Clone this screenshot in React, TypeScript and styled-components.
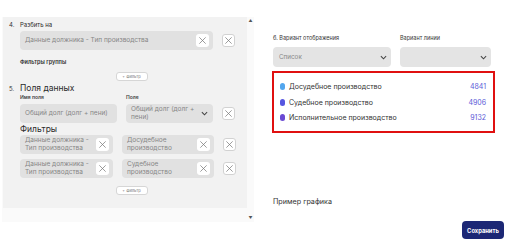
import React from "react";
import styled, { createGlobalStyle } from "styled-components";

const GlobalStyle = createGlobalStyle`
  * { box-sizing: border-box; }
  body {
    margin: 0;
    background: #ffffff;
    font-family: Inter, "Noto Sans", sans-serif;
    color: #2b2b2b;
  }
`;

const Page = styled.div`
  width: 512px;
  height: 244px;
  display: flex;
  overflow: hidden;
`;

// left side
const ScrollBox = styled.div`
  margin: 17px 0 0 2px;
  width: 252px;
  height: 205px;
  background: #fafafa;
  display: grid;
  grid-template-columns: 245px 7px;
  grid-template-rows: 191px 14px;
`;

const Rail = styled.div`
  grid-column: 2;
  grid-row: 1 / span 2;
  display: flex;
  flex-direction: column;
  justify-content: space-between;
  align-items: center;
  padding: 2px 0 2px;
  font-size: 4px;
  color: #555;
  line-height: 1;
`;

const Card = styled.div`
  grid-column: 1;
  grid-row: 1;
  background: #f2f2f2;
  margin-left: 1px;
  padding: 3px 0 0 6px;
  display: flex;
  flex-direction: column;
`;

const Section = styled.div<{ top?: number }>`
  display: grid;
  grid-template-columns: 11px 1fr;
  margin-top: ${({ top }) => top ?? 0}px;
`;

const Num = styled.span<{ big?: boolean }>`
  font-size: 6px;
  line-height: ${({ big }) => (big ? "11px" : "9px")};
  color: #333;
`;

const Body = styled.div`
  display: flex;
  flex-direction: column;
`;

const Title = styled.div<{ big?: boolean; top?: number }>`
  font-size: ${({ big }) => (big ? "8.5px" : "6px")};
  line-height: ${({ big }) => (big ? "11px" : "9px")};
  margin-top: ${({ top }) => top ?? 0}px;
  color: #2a2a2a;
`;

const Caption = styled.div<{ top?: number }>`
  font-size: 5.5px;
  font-weight: 600;
  color: #333;
  margin-top: ${({ top }) => top ?? 0}px;
  line-height: 7px;
`;

const Row = styled.div<{ top?: number }>`
  display: flex;
  align-items: center;
  gap: 9px;
  margin-top: ${({ top }) => top ?? 0}px;
`;

const Pair = styled.div`
  display: flex;
  gap: 9px;
`;

const Field = styled.div<{ w: number; h?: number }>`
  width: ${({ w }) => w}px;
  height: ${({ h }) => h ?? 19}px;
  background: #e1e1e1;
  border-radius: 4px;
  display: flex;
  align-items: center;
  justify-content: space-between;
  padding: 0 4px 0 5px;
  font-size: 6.5px;
  line-height: 7.5px;
  color: #868686;
`;

const FieldText = styled.span`
  flex: 1;
  min-width: 0;
  padding-right: 3px;
`;

const ChipX = styled.span`
  width: 13px;
  height: 13px;
  background: #fff;
  border-radius: 3px;
  display: flex;
  align-items: center;
  justify-content: center;
  flex-shrink: 0;
`;

const OuterX = styled(ChipX)`
  border: 1px solid #d2d2d2;
`;

const Chevron = styled.span`
  width: 10px;
  display: flex;
  justify-content: center;
  flex-shrink: 0;
`;

const Labels = styled.div`
  display: flex;
  font-size: 5px;
  font-weight: 600;
  color: #444;
  line-height: 7px;
`;

const LabelCell = styled.span<{ w: number }>`
  width: ${({ w }) => w}px;
`;

const AddButton = styled.div<{ top?: number }>`
  align-self: center;
  margin: ${({ top }) => top ?? 0}px 0 0 -4px;
  width: 32px;
  height: 9px;
  border: 1px solid #d6d6d6;
  border-radius: 3px;
  background: #fff;
  font-size: 4px;
  color: #777;
  display: flex;
  align-items: center;
  justify-content: center;
`;

// right side
const Right = styled.div`
  margin-left: 19px;
  width: 232px;
  padding-top: 34px;
  display: flex;
  flex-direction: column;
`;

const SelectRow = styled.div`
  display: grid;
  grid-template-columns: 118px 91px;
  column-gap: 9px;
`;

const SelectLabel = styled.div`
  font-size: 5.5px;
  line-height: 8px;
  color: #333;
`;

const Select = styled.div`
  margin-top: 5px;
  height: 20px;
  border-radius: 4px;
  background: #e4e4e4;
  display: flex;
  align-items: center;
  justify-content: space-between;
  padding: 0 4px 0 6px;
  font-size: 6.3px;
  color: #868686;
`;

const Legend = styled.div`
  margin: 4px 0 0 -1px;
  width: 223px;
  height: 62px;
  border: 2px solid #e01010;
  background: #fff;
  padding: 6px 7px 0 6px;
  display: flex;
  flex-direction: column;
`;

const LegendRow = styled.div`
  display: flex;
  align-items: center;
  height: 15.5px;
  font-size: 7px;
  color: #333;
`;

const Dot = styled.span<{ color: string }>`
  width: 5px;
  height: 7px;
  border-radius: 3px;
  background: ${({ color }) => color};
  margin-right: 4px;
`;

const LegendName = styled.span`
  flex: 1;
`;

const LegendValue = styled.span`
  color: #5a5ad8;
`;

const ChartTitle = styled.div`
  margin-top: 64px;
  font-size: 7.2px;
  color: #333;
`;

const SaveButton = styled.button`
  align-self: flex-end;
  margin: 15px 1px 0 0;
  width: 42px;
  height: 18px;
  border: none;
  border-radius: 4px;
  background: #1c2775;
  color: #fff;
  font-family: inherit;
  font-size: 5.8px;
  font-weight: 700;
  padding: 0;
`;

const XIcon = ({ size = 9 }: { size?: number }) => (
  <svg width={size} height={size} viewBox="0 0 10 10">
    <path d="M1.5 1.5 L8.5 8.5 M8.5 1.5 L1.5 8.5" stroke="#777" strokeWidth="0.8" fill="none" />
  </svg>
);

const ChevronIcon = () => (
  <svg width="7" height="5" viewBox="0 0 8 5">
    <path d="M1 1 L4 4 L7 1" stroke="#444" strokeWidth="1.2" fill="none" />
  </svg>
);

const filters = [
  ["Данные должника -\nТип производства", "Досудебное\nпроизводство"],
  ["Данные должника -\nТип производства", "Судебное\nпроизводство"],
];

const legend = [
  { name: "Досудебное производство", value: 4841, color: "#52a6ee" },
  { name: "Судебное производство", value: 4906, color: "#5656e0" },
  { name: "Исполнительное производство", value: 9132, color: "#6a4ad3" },
];

function lines(text: string) {
  return text.split("\n").map((l, i) => <div key={i}>{l}</div>);
}

export default function App() {
  return (
    <Page>
      <GlobalStyle />
      <ScrollBox>
        <Card>
          <Section>
            <Num>4.</Num>
            <Body>
              <Title>Разбить на</Title>
              <Row top={2}>
                <Field w={193}>
                  <FieldText>Данные должника - Тип производства</FieldText>
                  <ChipX>
                    <XIcon />
                  </ChipX>
                </Field>
                <OuterX>
                  <XIcon />
                </OuterX>
              </Row>
              <Caption top={9}>Фильтры группы</Caption>
              <AddButton top={6}>+ Фильтр</AddButton>
            </Body>
          </Section>
          <Section top={2}>
            <Num big>5.</Num>
            <Body>
              <Title big>Поля данных</Title>
              <Labels>
                <LabelCell w={106}>Имя поля</LabelCell>
                <LabelCell w={60}>Поле</LabelCell>
              </Labels>
              <Row top={3}>
                <Pair>
                  <Field w={97}>
                    <FieldText>Общий долг (долг + пени)</FieldText>
                  </Field>
                  <Field w={87}>
                    <FieldText>{lines("Общий долг (долг +\nпени)")}</FieldText>
                    <Chevron>
                      <ChevronIcon />
                    </Chevron>
                  </Field>
                </Pair>
                <OuterX>
                  <XIcon />
                </OuterX>
              </Row>
              <Title big top={1}>
                Фильтры
              </Title>
              {filters.map((f, i) => (
                <Row key={i} top={i === 0 ? 0 : 5}>
                  <Pair>
                    <Field w={93}>
                      <FieldText>{lines(f[0])}</FieldText>
                      <ChipX>
                        <XIcon />
                      </ChipX>
                    </Field>
                    <Field w={92}>
                      <FieldText>{lines(f[1])}</FieldText>
                      <ChipX>
                        <XIcon />
                      </ChipX>
                    </Field>
                  </Pair>
                  <OuterX>
                    <XIcon />
                  </OuterX>
                </Row>
              ))}
              <AddButton top={8}>+ Фильтр</AddButton>
            </Body>
          </Section>
        </Card>
        <Rail>
          <span>▲</span>
          <span>▼</span>
        </Rail>
      </ScrollBox>
      <Right>
        <SelectRow>
          <SelectLabel>6. Вариант отображения</SelectLabel>
          <SelectLabel>Вариант линии</SelectLabel>
          <Select>
            Список
            <ChevronIcon />
          </Select>
          <Select>
            <span />
            <ChevronIcon />
          </Select>
        </SelectRow>
        <Legend>
          {legend.map((l) => (
            <LegendRow key={l.name}>
              <Dot color={l.color} />
              <LegendName>{l.name}</LegendName>
              <LegendValue>{l.value}</LegendValue>
            </LegendRow>
          ))}
        </Legend>
        <ChartTitle>Пример графика</ChartTitle>
        <SaveButton>Сохранить</SaveButton>
      </Right>
    </Page>
  );
}
